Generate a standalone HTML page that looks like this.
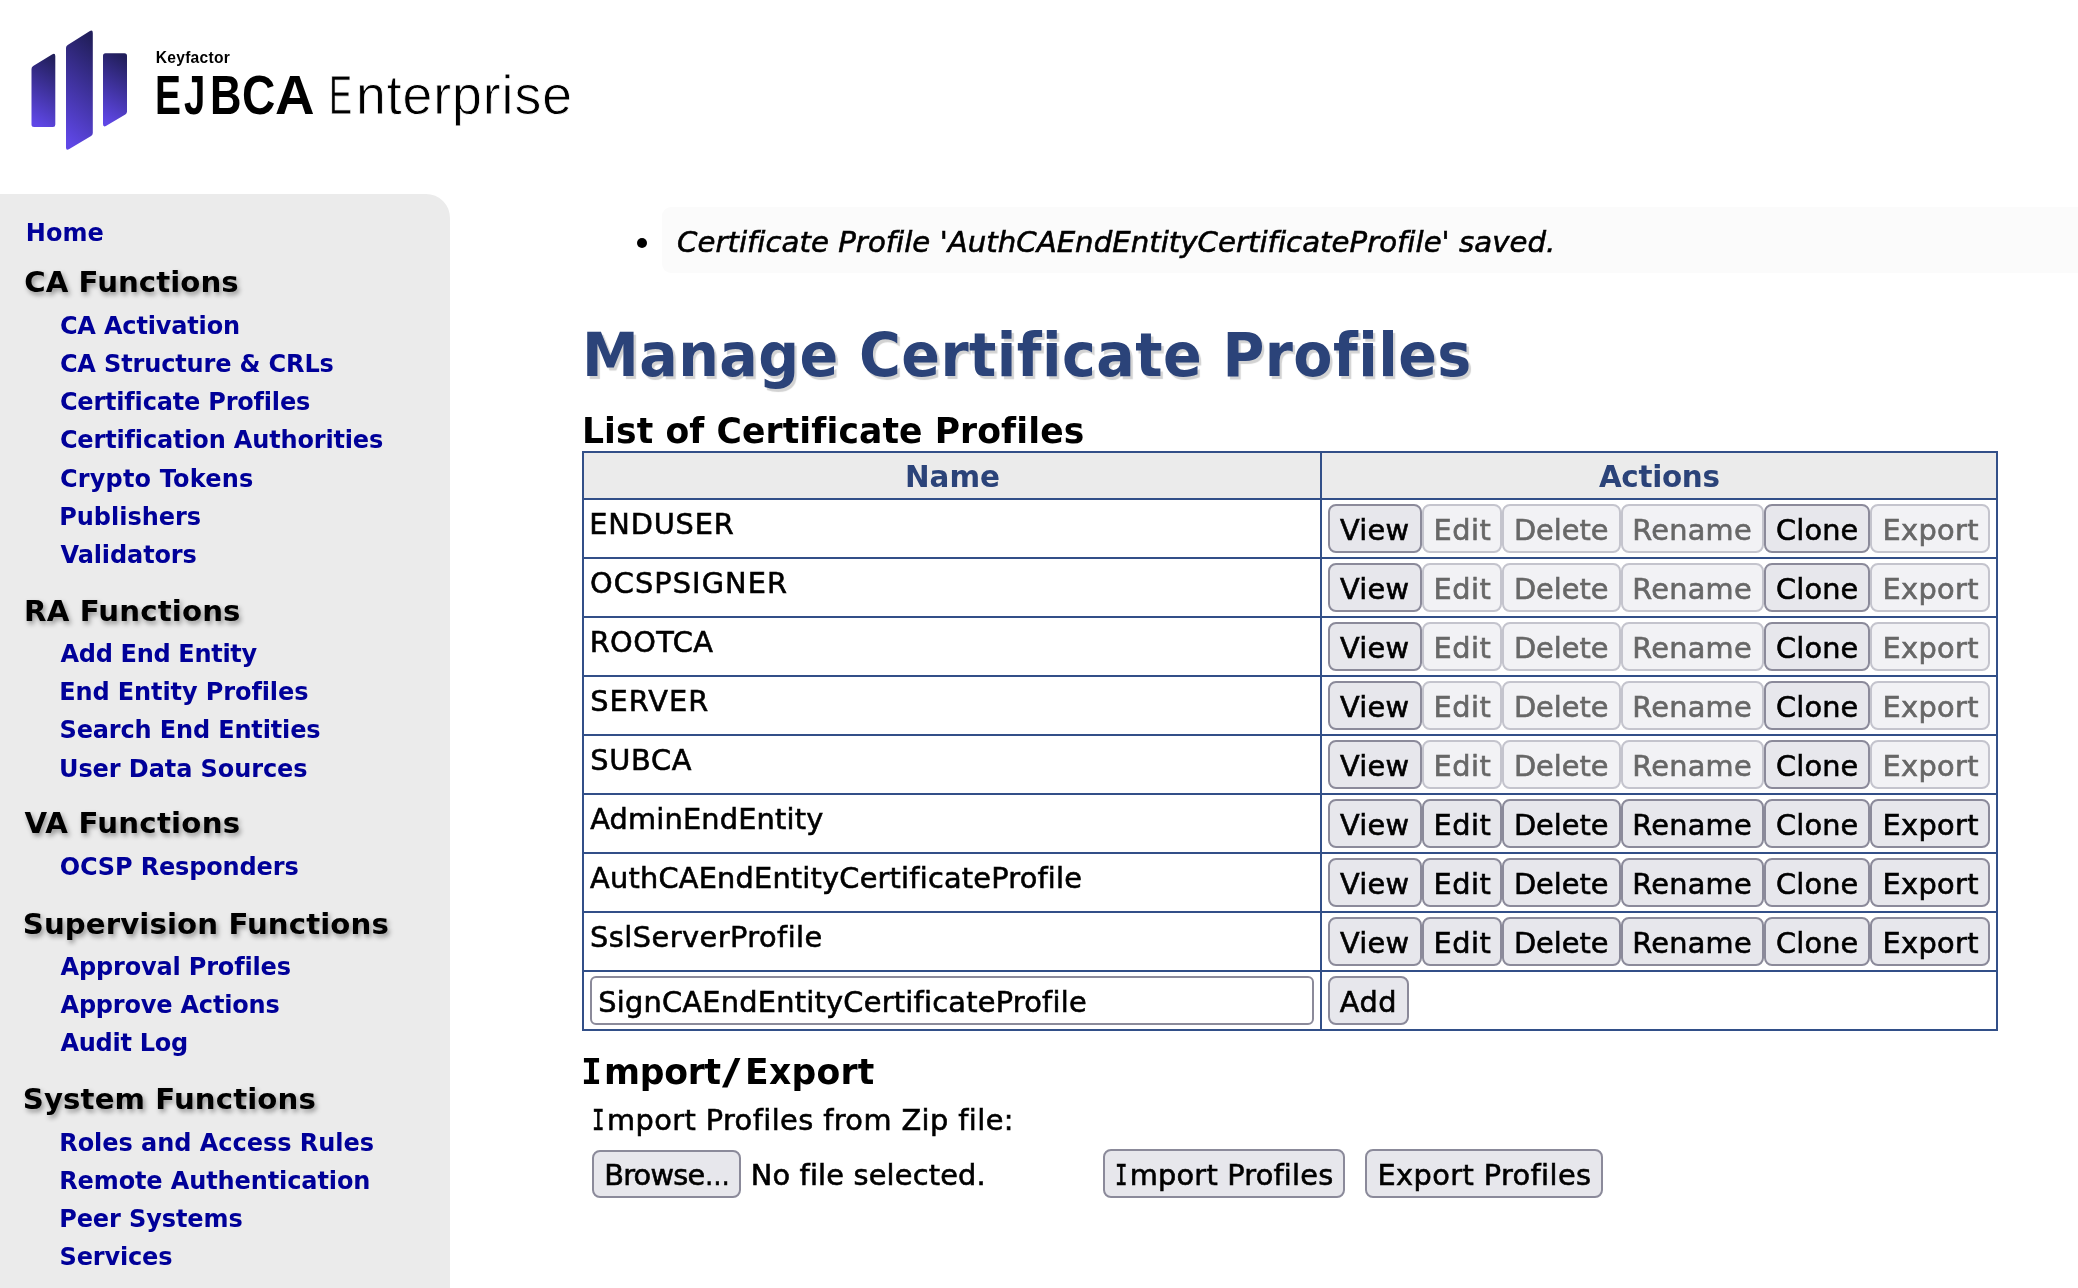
<!DOCTYPE html>
<html lang="en"><head><meta charset="utf-8"><title>EJBCA Administration - Manage Certificate Profiles</title>
<style>
html,body{margin:0;padding:0;background:#fff;}
body{width:2078px;height:1288px;position:relative;font-family:'DejaVu Sans','Liberation Sans',sans-serif;color:#000;}
#page{position:absolute;left:0;top:0;width:2078px;height:1288px;overflow:hidden;will-change:transform;}
h1,h2,h3,ul,li,em,b,a,label,button{margin:0;padding:0;font:inherit;color:inherit;text-decoration:none;list-style:none;}
.t{position:absolute;white-space:nowrap;line-height:normal;font-variant-ligatures:none;transform-origin:0 0;font-weight:normal;font-style:normal;}
.w{white-space:pre;}
.p{display:inline-block;position:relative;transform-origin:0 0;font-weight:normal;font-style:normal;}
.probe{display:inline-block;width:0;height:0;}
.bd{font-weight:bold;}
.it{font-style:italic;}
.r{-webkit-text-stroke:0.6px currentColor;}
.lib{font-family:'Liberation Sans','DejaVu Sans',sans-serif;}
.mono{font-family:'DejaVu Sans Mono','Liberation Mono',monospace;}
.sec{text-shadow:2px 2.5px 5px rgba(0,0,0,.38);}
.h1{text-shadow:2.5px 2.5px 1px #d2d2d2;}
#logo{position:absolute;left:0;top:0;}
#side{position:absolute;left:0;top:194px;width:450px;height:1094px;background:#ebebeb;border-top-right-radius:24px;}
#msg{position:absolute;left:662px;top:207px;width:1416px;height:66px;background:#fbfbfb;border-radius:9px 0 0 9px;}
#bullet{position:absolute;left:636.6px;top:237.5px;width:10.4px;height:10.4px;border-radius:50%;background:#000;}
#tbl{position:absolute;left:582px;top:451px;width:1412px;height:576px;border:2px solid #324f88;}
#thead{position:absolute;left:584px;top:453px;width:1412px;height:45px;background:#ebebeb;}
.hl{position:absolute;left:584px;width:1412px;height:2px;background:#324f88;}
#vl{position:absolute;left:1320px;top:453px;width:2px;height:576px;background:#324f88;}
.btn,.inp{position:absolute;box-sizing:border-box;display:block;overflow:visible;-webkit-appearance:none;appearance:none;outline:0;}
.btn{border:2px solid #8b8a9a;border-radius:8px;background:#e7e7ec;}
.btn[disabled]{border-color:#c4c4cd;background:#f2f2f5;}
.inp{border:2px solid #8b8a9a;border-radius:6px;background:#fff;margin:0;font-family:inherit;color:#000;font-variant-ligatures:none;}
</style></head>
<body>
<div id="page">
<svg id="logo" style="position:absolute;left:0;top:0" width="160" height="170" viewBox="0 0 160 170">
<defs><linearGradient id="g" x1="0.6" y1="0" x2="0.4" y2="1"><stop offset="0" stop-color="#221f5c"/><stop offset="1" stop-color="#5f47e6"/></linearGradient></defs>
<path d="M31.5 69 Q31.5 67 33.2 66 L52 54.5 Q55.3 52.7 55.3 56 L55.3 124.5 Q55.3 127 53 127 L34 127 Q31.5 127 31.5 124.5 Z" fill="url(#g)"/>
<path d="M66 48 Q66 46 67.7 45 L89.5 31.3 Q92.8 29.3 92.8 33 L92.8 133 Q92.8 135 91.1 136 L69.3 149 Q66 151 66 147.5 Z" fill="url(#g)"/>
<path d="M103 55.7 Q103 53.2 105.5 53.2 L124.5 53.2 Q127 53.2 127 55.7 L127 111.5 Q127 113.5 125.3 114.5 L106.3 125.8 Q103 127.6 103 124 Z" fill="url(#g)"/>
</svg>
<span class="t bd lib kf" style="left:155.8px;top:48.5px;font-size:15.6px;letter-spacing:0.254px;">Keyfactor</span>
<span class="t w brand" style="left:154.81px;top:62.15px;font-size:55.8px;"><span class="p bd lib" style="font-size:55.8px;margin-right:-8.23px;transform:scaleX(0.6969);">E</span><span class="p bd lib" style="font-size:55.8px;margin-right:-5.29px;transform:scaleX(0.6853);">J</span><span class="p bd lib" style="font-size:55.8px;margin-right:-8.11px;transform:scaleX(0.7800);">B</span><span class="p bd lib" style="font-size:55.8px;margin-right:-7.02px;transform:scaleX(0.8270);">C</span><span class="p bd lib" style="font-size:55.8px;margin-right:-4.57px;transform:scaleX(0.9815);">A</span><span class="p sp"> </span><span class="p lib" style="font-size:55.3px;-webkit-text-stroke:0.8px #fff;margin-right:-9.10px;top:-0.45px;transform:scaleX(0.6256);">E</span><span class="p lib" style="font-size:55.3px;letter-spacing:0.944px;-webkit-text-stroke:0.8px #fff;top:-0.45px;transform:scaleX(0.9700);">nterprise</span></span>
<div id="side"></div>
<nav>
<a class="t bd lnk" href="#" style="left:25.8px;top:218.9px;font-size:24px;letter-spacing:0.073px;color:#000099;">Home</a>
<h3 class="t bd sec" style="left:24.2px;top:264.8px;font-size:29.2px;letter-spacing:0.071px;">CA Functions</h3>
<a class="t bd lnk" href="#" style="left:59.9px;top:311.9px;font-size:24px;letter-spacing:-0.164px;color:#000099;">CA Activation</a>
<a class="t bd lnk" href="#" style="left:59.9px;top:350px;font-size:24px;letter-spacing:-0.136px;color:#000099;">CA Structure &amp; CRLs</a>
<a class="t bd lnk" href="#" style="left:59.9px;top:388.1px;font-size:24px;letter-spacing:-0.190px;color:#000099;">Certificate Profiles</a>
<a class="t bd lnk" href="#" style="left:59.9px;top:426.3px;font-size:24px;letter-spacing:-0.158px;color:#000099;">Certification Authorities</a>
<a class="t bd lnk" href="#" style="left:59.9px;top:464.5px;font-size:24px;letter-spacing:0.179px;color:#000099;">Crypto Tokens</a>
<a class="t bd lnk" href="#" style="left:59.2px;top:502.6px;font-size:24px;letter-spacing:-0.021px;color:#000099;">Publishers</a>
<a class="t bd lnk" href="#" style="left:60.5px;top:540.8px;font-size:24px;letter-spacing:-0.110px;color:#000099;">Validators</a>
<h3 class="t bd sec" style="left:24px;top:593.8px;font-size:29.2px;letter-spacing:0.158px;">RA Functions</h3>
<a class="t bd lnk" href="#" style="left:60.5px;top:639.9px;font-size:24px;letter-spacing:-0.305px;color:#000099;">Add End Entity</a>
<a class="t bd lnk" href="#" style="left:59.2px;top:678px;font-size:24px;letter-spacing:-0.098px;color:#000099;">End Entity Profiles</a>
<a class="t bd lnk" href="#" style="left:59.5px;top:716.4px;font-size:24px;letter-spacing:-0.146px;color:#000099;">Search End Entities</a>
<a class="t bd lnk" href="#" style="left:59px;top:754.6px;font-size:24px;letter-spacing:-0.081px;color:#000099;">User Data Sources</a>
<h3 class="t bd sec" style="left:24.5px;top:806.4px;font-size:29.2px;letter-spacing:0.245px;">VA Functions</h3>
<a class="t bd lnk" href="#" style="left:59.7px;top:853.4px;font-size:24px;letter-spacing:-0.149px;color:#000099;">OCSP Responders</a>
<h3 class="t bd sec" style="left:22.8px;top:907.1px;font-size:29.2px;letter-spacing:0.109px;">Supervision Functions</h3>
<a class="t bd lnk" href="#" style="left:60.5px;top:952.6px;font-size:24px;letter-spacing:-0.161px;color:#000099;">Approval Profiles</a>
<a class="t bd lnk" href="#" style="left:60.5px;top:990.8px;font-size:24px;letter-spacing:-0.194px;color:#000099;">Approve Actions</a>
<a class="t bd lnk" href="#" style="left:60.5px;top:1029px;font-size:24px;letter-spacing:-0.272px;color:#000099;">Audit Log</a>
<h3 class="t bd sec" style="left:22.8px;top:1081.9px;font-size:29.2px;letter-spacing:0.115px;">System Functions</h3>
<a class="t bd lnk" href="#" style="left:59.2px;top:1129px;font-size:24px;letter-spacing:-0.035px;color:#000099;">Roles and Access Rules</a>
<a class="t bd lnk" href="#" style="left:59.2px;top:1167.1px;font-size:24px;letter-spacing:-0.108px;color:#000099;">Remote Authentication</a>
<a class="t bd lnk" href="#" style="left:59.2px;top:1205.3px;font-size:24px;letter-spacing:-0.101px;color:#000099;">Peer Systems</a>
<a class="t bd lnk" href="#" style="left:59.5px;top:1243.2px;font-size:24px;letter-spacing:-0.154px;color:#000099;">Services</a>
</nav>
<main>
<div id="msg"></div><div id="bullet"></div>
<ul class="msgs"><li>
<em class="t r it" style="left:677px;top:225.1px;font-size:29.2px;letter-spacing:0.029px;">Certificate Profile 'AuthCAEndEntityCertificateProfile' saved.</em>
</li></ul>
<h1 class="t bd h1" style="left:582.02px;top:319.7px;font-size:59.8px;letter-spacing:0.441px;color:#2b4379;transform:scaleX(0.9550);">Manage Certificate Profiles</h1>
<h2 class="t bd" style="left:582.12px;top:409.8px;font-size:36px;letter-spacing:0.104px;transform:scaleX(0.9600);">List of Certificate Profiles</h2>
<div id="tbl"></div><div id="thead"></div><div id="vl"></div>
<div class="hl" style="top:498px"></div>
<div class="hl" style="top:557px"></div>
<div class="hl" style="top:616px"></div>
<div class="hl" style="top:675px"></div>
<div class="hl" style="top:734px"></div>
<div class="hl" style="top:793px"></div>
<div class="hl" style="top:852px"></div>
<div class="hl" style="top:911px"></div>
<div class="hl" style="top:970px"></div>
<section class="grid">
<b class="t bd" style="left:905px;top:459.9px;font-size:29.4px;letter-spacing:-0.022px;color:#2b4379;">Name</b>
<b class="t bd" style="left:1598.9px;top:459.9px;font-size:29.4px;letter-spacing:-0.302px;color:#2b4379;">Actions</b>
<span class="t r" style="left:589.2px;top:506.7px;font-size:28.8px;letter-spacing:0.854px;">ENDUSER</span>
<button class="btn" type="button" style="left:1328px;top:504px;width:94px;height:49px"><span class="t r" style="left:10px;top:6.7px;font-size:28.8px;letter-spacing:0.203px;">View</span></button>
<button class="btn" type="button" disabled style="left:1422px;top:504px;width:80px;height:49px"><span class="t r" style="left:9.5px;top:6.7px;font-size:28.8px;letter-spacing:0.470px;color:#676767;">Edit</span></button>
<button class="btn" type="button" disabled style="left:1502px;top:504px;width:119px;height:49px"><span class="t r" style="left:9.9px;top:6.7px;font-size:28.8px;letter-spacing:-0.022px;color:#676767;">Delete</span></button>
<button class="btn" type="button" disabled style="left:1621px;top:504px;width:143px;height:49px"><span class="t r" style="left:9.3px;top:6.7px;font-size:28.8px;letter-spacing:0.241px;color:#676767;">Rename</span></button>
<button class="btn" type="button" style="left:1764px;top:504px;width:106px;height:49px"><span class="t r" style="left:10px;top:6.7px;font-size:28.8px;letter-spacing:0.153px;">Clone</span></button>
<button class="btn" type="button" disabled style="left:1870px;top:504px;width:120px;height:49px"><span class="t r" style="left:10.5px;top:6.7px;font-size:28.8px;letter-spacing:0.345px;color:#676767;">Export</span></button>
<span class="t r" style="left:590px;top:565.7px;font-size:28.8px;letter-spacing:1.083px;">OCSPSIGNER</span>
<button class="btn" type="button" style="left:1328px;top:563px;width:94px;height:49px"><span class="t r" style="left:10px;top:6.7px;font-size:28.8px;letter-spacing:0.203px;">View</span></button>
<button class="btn" type="button" disabled style="left:1422px;top:563px;width:80px;height:49px"><span class="t r" style="left:9.5px;top:6.7px;font-size:28.8px;letter-spacing:0.470px;color:#676767;">Edit</span></button>
<button class="btn" type="button" disabled style="left:1502px;top:563px;width:119px;height:49px"><span class="t r" style="left:9.9px;top:6.7px;font-size:28.8px;letter-spacing:-0.022px;color:#676767;">Delete</span></button>
<button class="btn" type="button" disabled style="left:1621px;top:563px;width:143px;height:49px"><span class="t r" style="left:9.3px;top:6.7px;font-size:28.8px;letter-spacing:0.241px;color:#676767;">Rename</span></button>
<button class="btn" type="button" style="left:1764px;top:563px;width:106px;height:49px"><span class="t r" style="left:10px;top:6.7px;font-size:28.8px;letter-spacing:0.153px;">Clone</span></button>
<button class="btn" type="button" disabled style="left:1870px;top:563px;width:120px;height:49px"><span class="t r" style="left:10.5px;top:6.7px;font-size:28.8px;letter-spacing:0.345px;color:#676767;">Export</span></button>
<span class="t r" style="left:589.7px;top:624.7px;font-size:28.8px;letter-spacing:0.427px;">ROOTCA</span>
<button class="btn" type="button" style="left:1328px;top:622px;width:94px;height:49px"><span class="t r" style="left:10px;top:6.7px;font-size:28.8px;letter-spacing:0.203px;">View</span></button>
<button class="btn" type="button" disabled style="left:1422px;top:622px;width:80px;height:49px"><span class="t r" style="left:9.5px;top:6.7px;font-size:28.8px;letter-spacing:0.470px;color:#676767;">Edit</span></button>
<button class="btn" type="button" disabled style="left:1502px;top:622px;width:119px;height:49px"><span class="t r" style="left:9.9px;top:6.7px;font-size:28.8px;letter-spacing:-0.022px;color:#676767;">Delete</span></button>
<button class="btn" type="button" disabled style="left:1621px;top:622px;width:143px;height:49px"><span class="t r" style="left:9.3px;top:6.7px;font-size:28.8px;letter-spacing:0.241px;color:#676767;">Rename</span></button>
<button class="btn" type="button" style="left:1764px;top:622px;width:106px;height:49px"><span class="t r" style="left:10px;top:6.7px;font-size:28.8px;letter-spacing:0.153px;">Clone</span></button>
<button class="btn" type="button" disabled style="left:1870px;top:622px;width:120px;height:49px"><span class="t r" style="left:10.5px;top:6.7px;font-size:28.8px;letter-spacing:0.345px;color:#676767;">Export</span></button>
<span class="t r" style="left:590.2px;top:683.7px;font-size:28.8px;letter-spacing:1.039px;">SERVER</span>
<button class="btn" type="button" style="left:1328px;top:681px;width:94px;height:49px"><span class="t r" style="left:10px;top:6.7px;font-size:28.8px;letter-spacing:0.203px;">View</span></button>
<button class="btn" type="button" disabled style="left:1422px;top:681px;width:80px;height:49px"><span class="t r" style="left:9.5px;top:6.7px;font-size:28.8px;letter-spacing:0.470px;color:#676767;">Edit</span></button>
<button class="btn" type="button" disabled style="left:1502px;top:681px;width:119px;height:49px"><span class="t r" style="left:9.9px;top:6.7px;font-size:28.8px;letter-spacing:-0.022px;color:#676767;">Delete</span></button>
<button class="btn" type="button" disabled style="left:1621px;top:681px;width:143px;height:49px"><span class="t r" style="left:9.3px;top:6.7px;font-size:28.8px;letter-spacing:0.241px;color:#676767;">Rename</span></button>
<button class="btn" type="button" style="left:1764px;top:681px;width:106px;height:49px"><span class="t r" style="left:10px;top:6.7px;font-size:28.8px;letter-spacing:0.153px;">Clone</span></button>
<button class="btn" type="button" disabled style="left:1870px;top:681px;width:120px;height:49px"><span class="t r" style="left:10.5px;top:6.7px;font-size:28.8px;letter-spacing:0.345px;color:#676767;">Export</span></button>
<span class="t r" style="left:590.2px;top:742.7px;font-size:28.8px;letter-spacing:0.719px;">SUBCA</span>
<button class="btn" type="button" style="left:1328px;top:740px;width:94px;height:49px"><span class="t r" style="left:10px;top:6.7px;font-size:28.8px;letter-spacing:0.203px;">View</span></button>
<button class="btn" type="button" disabled style="left:1422px;top:740px;width:80px;height:49px"><span class="t r" style="left:9.5px;top:6.7px;font-size:28.8px;letter-spacing:0.470px;color:#676767;">Edit</span></button>
<button class="btn" type="button" disabled style="left:1502px;top:740px;width:119px;height:49px"><span class="t r" style="left:9.9px;top:6.7px;font-size:28.8px;letter-spacing:-0.022px;color:#676767;">Delete</span></button>
<button class="btn" type="button" disabled style="left:1621px;top:740px;width:143px;height:49px"><span class="t r" style="left:9.3px;top:6.7px;font-size:28.8px;letter-spacing:0.241px;color:#676767;">Rename</span></button>
<button class="btn" type="button" style="left:1764px;top:740px;width:106px;height:49px"><span class="t r" style="left:10px;top:6.7px;font-size:28.8px;letter-spacing:0.153px;">Clone</span></button>
<button class="btn" type="button" disabled style="left:1870px;top:740px;width:120px;height:49px"><span class="t r" style="left:10.5px;top:6.7px;font-size:28.8px;letter-spacing:0.345px;color:#676767;">Export</span></button>
<span class="t r" style="left:590.2px;top:801.7px;font-size:28.8px;letter-spacing:0.190px;">AdminEndEntity</span>
<button class="btn" type="button" style="left:1328px;top:799px;width:94px;height:49px"><span class="t r" style="left:10px;top:6.7px;font-size:28.8px;letter-spacing:0.203px;">View</span></button>
<button class="btn" type="button" style="left:1422px;top:799px;width:80px;height:49px"><span class="t r" style="left:9.5px;top:6.7px;font-size:28.8px;letter-spacing:0.470px;">Edit</span></button>
<button class="btn" type="button" style="left:1502px;top:799px;width:119px;height:49px"><span class="t r" style="left:9.9px;top:6.7px;font-size:28.8px;letter-spacing:-0.022px;">Delete</span></button>
<button class="btn" type="button" style="left:1621px;top:799px;width:143px;height:49px"><span class="t r" style="left:9.3px;top:6.7px;font-size:28.8px;letter-spacing:0.241px;">Rename</span></button>
<button class="btn" type="button" style="left:1764px;top:799px;width:106px;height:49px"><span class="t r" style="left:10px;top:6.7px;font-size:28.8px;letter-spacing:0.153px;">Clone</span></button>
<button class="btn" type="button" style="left:1870px;top:799px;width:120px;height:49px"><span class="t r" style="left:10.5px;top:6.7px;font-size:28.8px;letter-spacing:0.345px;">Export</span></button>
<span class="t r" style="left:590.1px;top:860.7px;font-size:28.8px;letter-spacing:0.209px;">AuthCAEndEntityCertificateProfile</span>
<button class="btn" type="button" style="left:1328px;top:858px;width:94px;height:49px"><span class="t r" style="left:10px;top:6.7px;font-size:28.8px;letter-spacing:0.203px;">View</span></button>
<button class="btn" type="button" style="left:1422px;top:858px;width:80px;height:49px"><span class="t r" style="left:9.5px;top:6.7px;font-size:28.8px;letter-spacing:0.470px;">Edit</span></button>
<button class="btn" type="button" style="left:1502px;top:858px;width:119px;height:49px"><span class="t r" style="left:9.9px;top:6.7px;font-size:28.8px;letter-spacing:-0.022px;">Delete</span></button>
<button class="btn" type="button" style="left:1621px;top:858px;width:143px;height:49px"><span class="t r" style="left:9.3px;top:6.7px;font-size:28.8px;letter-spacing:0.241px;">Rename</span></button>
<button class="btn" type="button" style="left:1764px;top:858px;width:106px;height:49px"><span class="t r" style="left:10px;top:6.7px;font-size:28.8px;letter-spacing:0.153px;">Clone</span></button>
<button class="btn" type="button" style="left:1870px;top:858px;width:120px;height:49px"><span class="t r" style="left:10.5px;top:6.7px;font-size:28.8px;letter-spacing:0.345px;">Export</span></button>
<span class="t r" style="left:590.1px;top:919.7px;font-size:28.8px;letter-spacing:0.463px;">SslServerProfile</span>
<button class="btn" type="button" style="left:1328px;top:917px;width:94px;height:49px"><span class="t r" style="left:10px;top:6.7px;font-size:28.8px;letter-spacing:0.203px;">View</span></button>
<button class="btn" type="button" style="left:1422px;top:917px;width:80px;height:49px"><span class="t r" style="left:9.5px;top:6.7px;font-size:28.8px;letter-spacing:0.470px;">Edit</span></button>
<button class="btn" type="button" style="left:1502px;top:917px;width:119px;height:49px"><span class="t r" style="left:9.9px;top:6.7px;font-size:28.8px;letter-spacing:-0.022px;">Delete</span></button>
<button class="btn" type="button" style="left:1621px;top:917px;width:143px;height:49px"><span class="t r" style="left:9.3px;top:6.7px;font-size:28.8px;letter-spacing:0.241px;">Rename</span></button>
<button class="btn" type="button" style="left:1764px;top:917px;width:106px;height:49px"><span class="t r" style="left:10px;top:6.7px;font-size:28.8px;letter-spacing:0.153px;">Clone</span></button>
<button class="btn" type="button" style="left:1870px;top:917px;width:120px;height:49px"><span class="t r" style="left:10.5px;top:6.7px;font-size:28.8px;letter-spacing:0.345px;">Export</span></button>
<input class="inp r" type="text" name="addProfileName" value="SignCAEndEntityCertificateProfile" style="left:590px;top:976px;width:724px;height:49px;padding:7px 0 4px 6.2px;font-size:28.8px;letter-spacing:0.249px;line-height:34px;">
<button class="btn" type="button" style="left:1328px;top:976px;width:81px;height:49px"><span class="t r" style="left:9.8px;top:6.9px;font-size:28.8px;letter-spacing:0.507px;">Add</span></button>
</section>
<h2 class="t w" style="left:580.8px;top:1051.2px;font-size:36px;"><span class="p bd mono" style="font-size:36px;margin-right:1.20px;transform:scaleX(0.9679);">I</span><span class="p bd" style="font-size:36px;letter-spacing:-0.272px;margin-right:-2.91px;transform:scaleX(0.9600);">mport</span><span class="p bd" style="font-size:36px;margin-right:9.36px;transform:scaleX(1.4064);">/</span><span class="p bd" style="font-size:36px;letter-spacing:0.298px;transform:scaleX(0.9600);">Export</span></h2>
<label class="t w" style="left:592.15px;top:1102.8px;font-size:28.8px;"><span class="p r mono" style="font-size:28.8px;margin-right:-2.50px;transform:scaleX(0.7227);">I</span><span class="p r" style="font-size:28.8px;letter-spacing:0.417px;">mport Profiles from Zip file:</span></label>
<button class="btn" type="button" style="left:592px;top:1150px;width:149px;height:48px"><span class="t w" style="left:10.2px;top:5.8px;font-size:28.8px;"><span class="p r" style="font-size:28.8px;letter-spacing:-0.789px;margin-right:0.39px;">Browse</span><span class="p r" style="font-size:28.8px;transform:scaleX(0.8609);">…</span></span></button>
<span class="t r" style="left:750.7px;top:1157.8px;font-size:28.8px;letter-spacing:0.188px;">No file selected.</span>
<button class="btn" type="button" style="left:1103px;top:1149px;width:242px;height:49px"><span class="t w" style="left:9.85px;top:6.8px;font-size:28.8px;"><span class="p r mono" style="font-size:28.8px;margin-right:-2.40px;transform:scaleX(0.7227);">I</span><span class="p r" style="font-size:28.8px;letter-spacing:0.202px;">mport Profiles</span></span></button>
<button class="btn" type="button" style="left:1365px;top:1149px;width:238px;height:49px"><span class="t r" style="left:10.5px;top:6.8px;font-size:28.8px;letter-spacing:0.395px;">Export Profiles</span></button>
</main>
</div>
</body></html>
